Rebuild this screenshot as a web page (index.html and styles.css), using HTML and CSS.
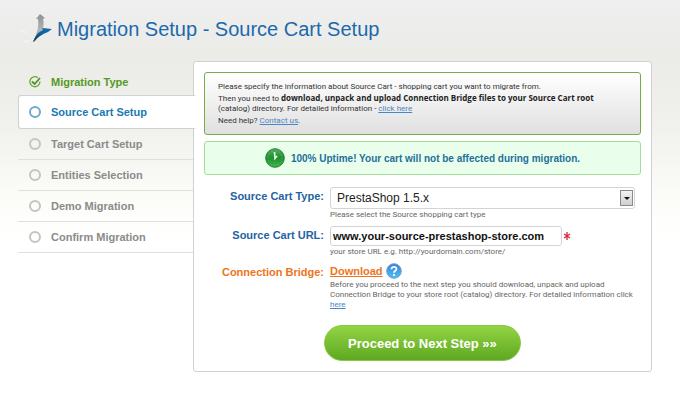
FILE: index.html
```html
<!DOCTYPE html>
<html lang="en">
<head>
<meta charset="utf-8">
<title>Migration Setup - Source Cart Setup</title>
<link rel="stylesheet" href="styles.css">
</head>
<body>

<header class="header">
	<svg class="logo" width="36" height="34" viewBox="0 0 36 34" aria-hidden="true">
		<defs>
			<linearGradient id="grey" x1="0" y1="0" x2="0" y2="1">
				<stop offset="0" stop-color="#8f9294"/>
				<stop offset="0.6" stop-color="#b4b7b9"/>
				<stop offset="1" stop-color="#56606a"/>
			</linearGradient>
			<linearGradient id="blue" x1="1" y1="0" x2="0" y2="1">
				<stop offset="0" stop-color="#1a6fae"/>
				<stop offset="0.5" stop-color="#0f5f9e"/>
				<stop offset="1" stop-color="#123048"/>
			</linearGradient>
		</defs>
		<path d="M2 20l3-2 1 3 3-2M5 29l4 1 3-2" stroke="#f8f8f8" fill="none"/>
		<path d="M22 2L27 6 25 7C27 15 24 22 17 29L15 30C19 22 21 15 20 7L18 7Z" fill="url(#grey)"/>
		<path d="M34 17L30 20C24 22 20 25 15 30C17 25 20 20 25 18L24 16C28 16 31 17 34 17Z" fill="url(#blue)"/>
	</svg>
	<h1>Migration Setup - Source Cart Setup</h1>
</header>

<div class="wizard">
	<ol class="steps">
		<li class="step done">
			<svg width="12" height="12" viewBox="0 0 12 12" aria-hidden="true">
				<path d="M9 1.8A5 5 0 1 0 10.9 5.500" fill="none" stroke="#6aa83a" stroke-width="1.300"/>
				<path d="M3 5.500L5.700 8 11 2" fill="none" stroke="#4d9420" stroke-width="1.800"/>
			</svg>
			Migration Type
		</li>
		<li class="step active"><span class="dot"></span>Source Cart Setup</li>
		<li class="step"><span class="dot"></span>Target Cart Setup</li>
		<li class="step"><span class="dot"></span>Entities Selection</li>
		<li class="step"><span class="dot"></span>Demo Migration</li>
		<li class="step"><span class="dot"></span>Confirm Migration</li>
	</ol>

	<form class="panel">
		<div class="info">
			<p>Please specify the information about Source Cart - shopping cart you want to migrate from.</p>
			<p>Then you need to <b>download, unpack and upload Connection Bridge files to your Source Cart root</b><br>(catalog) directory. For detailed information - <a href="#">click here</a></p>
			<p>Need help? <a href="#">Contact us</a>.</p>
		</div>

		<div class="uptime">
			<svg width="20" height="20" viewBox="0 0 20 20" aria-hidden="true">
				<defs>
					<linearGradient id="clock" x1="0" y1="0" x2="0" y2="1">
						<stop offset="0" stop-color="#55ad5d"/>
						<stop offset="0.5" stop-color="#1f9030"/>
						<stop offset="1" stop-color="#3fb84a"/>
					</linearGradient>
				</defs>
				<circle cx="10" cy="10" r="9.300" fill="url(#clock)" stroke="#2b7d38"/>
				<circle cx="10" cy="10" r="7" fill="none" stroke="#5fbd6a" stroke-dasharray="1 2.660"/>
				<path d="M9.500 4L10 10.500 12 8" fill="none" stroke="#eaffea" stroke-width="1.600"/>
			</svg>
			<span>100% Uptime! Your cart will not be affected during migration.</span>
		</div>

		<div class="row">
			<label class="name" for="cartType">Source Cart Type:</label>
			<div class="field">
				<div class="select">
					<select id="cartType">
						<option>PrestaShop 1.5.x</option>
						<option>Magento</option>
						<option>OpenCart</option>
					</select>
					<span class="arrow"></span>
				</div>
				<p class="hint">Please select the Source shopping cart type</p>
			</div>
		</div>

		<div class="row">
			<label class="name" for="cartUrl">Source Cart URL:</label>
			<div class="field">
				<div class="url">
					<input type="text" id="cartUrl" value="www.your-source-prestashop-store.com">
					<svg width="8" height="8" viewBox="0 0 8 8" role="img" aria-label="required">
						<path d="M4 0v8M1 2l6 4M7 2l-6 4" stroke="#d42a38" stroke-width="1.300"/>
					</svg>
				</div>
				<p class="hint">your store URL e.g. http://yourdomain.com/store/</p>
			</div>
		</div>

		<div class="row bridge">
			<span class="name">Connection Bridge:</span>
			<div class="field">
				<div class="download">
					<a href="#">Download</a>
					<svg width="16" height="16" viewBox="0 0 16 16" role="img" aria-label="Help">
						<defs>
							<linearGradient id="help" x1="0" y1="0" x2="0" y2="1">
								<stop offset="0" stop-color="#3a7fd6"/>
								<stop offset="1" stop-color="#4cc0f5"/>
							</linearGradient>
						</defs>
						<circle cx="8" cy="8" r="7.300" fill="url(#help)" stroke="#6a9fd6"/>
						<path d="M5.500 6.200C5.500 3 10.600 3.200 10.500 6C10.400 7.700 8 7.800 8 9.800M8 11v2" fill="none" stroke="#fff" stroke-width="1.800"/>
					</svg>
				</div>
				<p class="hint">Before you proceed to the next step you should download, unpack and upload Connection Bridge to your store root (catalog) directory. For detailed information click <a href="#">here</a></p>
			</div>
		</div>

		<button type="button" class="next">Proceed to Next Step »»</button>
	</form>
</div>

</body>
</html>
```
FILE: styles.css
```css
* {
	box-sizing: border-box;
}

body {
	margin: 0;
	padding: 12px 28px 30px 18px;
	background: #fff linear-gradient(#eeefef 0, #ebebe7 60px, #f1f1ee 130px, #fcfdf8 200px, #fff 240px) no-repeat;
	font-family: "Liberation Sans", Arial, sans-serif;
	font-size: 12px;
}

h1, p, ol {
	margin: 0;
	padding: 0;
	font-weight: normal;
}

.header {
	display: flex;
	align-items: center;
	gap: 3px;
	height: 34px;
}

.header h1 {
	font-size: 20px;
	color: #1c69ab;
}

.wizard {
	display: flex;
	align-items: flex-start;
	margin-top: 15px;
}

/* steps on the left */
.steps {
	width: 175px;
	flex: none;
	padding-top: 14px;
	list-style: none;
}

.step {
	display: flex;
	align-items: center;
	gap: 10px;
	height: 31px;
	padding-left: 11px;
	border-bottom: 1px solid #dfe0dc;
	font-size: 11px;
	font-weight: bold;
	color: #8b8b8b;
}

.step.done {
	height: 14px;
	border: 0;
	color: #549a25;
}

.step.active {
	position: relative;
	height: 34px;
	margin: 6px -2px 0 0;
	padding-left: 10px;
	background: #fff;
	border: 1px solid #d0d1d0;
	border-right: 0;
	border-radius: 3px 0 0 3px;
	color: #1979b5;
}

.dot {
	width: 12px;
	height: 12px;
	border: 2px solid #c4c4c4;
	border-radius: 50%;
}

.active .dot {
	border-color: #6fa9d3;
}

/* main panel */
.panel {
	flex: 1;
	min-width: 0;
	padding: 10px;
	background: #fff;
	border: 1px solid #d0d1d2;
	border-radius: 3px;
}

.info {
	padding: 9px 13px 6px;
	background: linear-gradient(#fff, #e0e0e0);
	border: 1px solid #76ad4c;
	border-radius: 3px;
	font-family: Roboto, Tahoma, sans-serif;
	font-size: 8px;
	line-height: 10px;
	color: #333;
}

.info p {
	margin-bottom: 2px;
}

.info b {
	font-family: "Open Sans", Tahoma, sans-serif;
	line-height: 1;
	color: #222;
}

.info a, .hint a {
	color: #4a86c5;
}

.uptime {
	display: flex;
	align-items: center;
	justify-content: center;
	gap: 6px;
	height: 34px;
	margin: 6px 0 12px;
	background: #e9ffec;
	border: 1px solid #a3dd9b;
	border-radius: 3px;
	font-size: 10px;
	font-weight: bold;
	color: #1e6f9b;
}

.row {
	display: flex;
	gap: 6px;
	margin-bottom: 6px;
	padding-right: 6px;
}

.name {
	width: 120px;
	flex: none;
	line-height: 18px;
	text-align: right;
	font-size: 11px;
	font-weight: bold;
	color: #2563a2;
}

.field {
	flex: 1;
	min-width: 0;
}

.select {
	position: relative;
}

.select select {
	display: block;
	width: 100%;
	height: 22px;
	padding: 0 20px 0 6px;
	appearance: none;
	background: #fff;
	border: 1px solid #d4d4d4;
	border-radius: 3px;
	font-family: inherit;
	font-size: 12px;
	color: #222;
}

.arrow {
	position: absolute;
	top: 3px;
	right: 2px;
	display: flex;
	align-items: center;
	justify-content: center;
	width: 13px;
	height: 16px;
	background: linear-gradient(#f3f3f3, #cfcfcf);
	border: 1px solid #8a8a8a;
	pointer-events: none;
}

.arrow::after {
	content: "";
	border: 3px solid transparent;
	border-top-color: #111;
	border-bottom: 0;
}

.url {
	display: flex;
	align-items: center;
	gap: 1px;
}

.url input {
	width: 232px;
	height: 20px;
	padding: 0 2px;
	border: 1px solid #d4d4d4;
	border-radius: 3px;
	font-family: inherit;
	font-size: 11px;
	font-weight: bold;
	color: #111;
}

.hint {
	padding-top: 1px;
	font-family: Roboto, Tahoma, sans-serif;
	font-size: 8px;
	line-height: 10px;
	color: #666;
}

.bridge {
	margin-bottom: 15px;
}

.bridge .name, .download a {
	color: #ee7420;
}

.download {
	display: flex;
	align-items: center;
	gap: 3px;
	height: 16px;
}

.download a {
	font-size: 11px;
	font-weight: bold;
}

.next {
	display: block;
	height: 36px;
	margin-left: 120px;
	padding: 0 23px;
	background: linear-gradient(#93d443, #5ea822);
	border: 1px solid #86c845;
	border-radius: 18px;
	font-family: inherit;
	font-size: 13px;
	font-weight: bold;
	color: #fff;
	cursor: pointer;
}
```
